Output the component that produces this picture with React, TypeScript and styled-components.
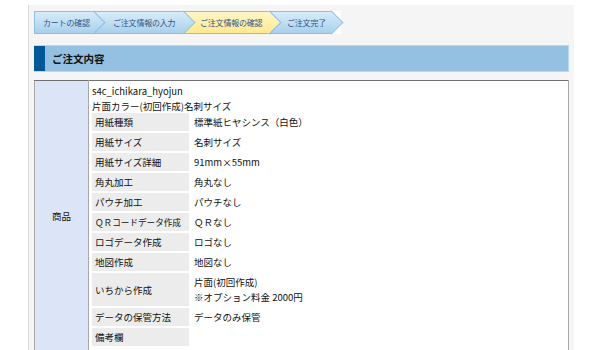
import React from "react";
import styled, { createGlobalStyle } from "styled-components";

const GlobalStyle = createGlobalStyle`
  html, body { margin: 0; padding: 0; background: #ffffff; }
  body {
    font-family: "Noto Sans CJK JP", "Noto Sans", sans-serif;
    color: #111;
  }
`;

const Page = styled.div`
  padding: 5px 0 0 28px;
  width: 600px;
  box-sizing: border-box;
`;

const Main = styled.div`
  width: 546px;
  min-height: 345px;
  box-sizing: border-box;
  border-left: 1px solid #dcdcdc;
  background: #f5f5f5;
  padding: 6px 5px 0 5px;
`;

const Breadcrumb = styled.ol`
  display: flex;
  width: fit-content;
  list-style: none;
  margin: 0;
  padding: 0 9px 0 0;
  background: #ffffff;
  height: 23px;
`;

const Step = styled.li<{ $active?: boolean; $w: number; $pl: number; $first?: boolean }>`
  position: relative;
  box-sizing: border-box;
  width: ${(p) => p.$w}px;
  height: 23px;
  padding-left: ${(p) => p.$pl}px;
  display: flex;
  align-items: center;
  font-size: 8px;
  letter-spacing: -0.2px;
  white-space: nowrap;
  color: #2f5486;
  border-top: 1px solid #8fbde0;
  border-bottom: 1px solid #8fbde0;
  border-left: ${(p) => (p.$first ? "1px solid #8fbde0" : "none")};
  background: ${(p) =>
    p.$active
      ? "linear-gradient(to bottom, #fff6c8 0%, #ffe98f 100%)"
      : "linear-gradient(to bottom, #d8ecf8 0%, #a9d0ec 100%)"};
  &::after {
    content: "";
    position: absolute;
    z-index: 1;
    top: 2px;
    right: -8px;
    width: 16px;
    height: 16px;
    transform: rotate(45deg);
    border-top: 1px solid #8fbde0;
    border-right: 1px solid #8fbde0;
    background: ${(p) =>
      p.$active
        ? "linear-gradient(to bottom right, #fff6c8 0%, #ffe98f 100%)"
        : "linear-gradient(to bottom right, #d8ecf8 0%, #a9d0ec 100%)"};
  }
`;

const StepLabel = styled.span`
  position: relative;
  z-index: 2;
`;

const Heading = styled.h2`
  margin: 11px 0 8px 0;
  height: 27px;
  box-sizing: border-box;
  display: flex;
  align-items: stretch;
  background: #94c1e2;
  border: 1px solid #b9d8ef;
  border-left: none;
  font-size: 10.5px;
  font-weight: bold;
  color: #111;
`;

const HeadingMark = styled.span`
  width: 11px;
  background: #005896;
  margin-right: 7px;
`;

const HeadingText = styled.span`
  display: flex;
  align-items: center;
`;

const OrderTable = styled.table`
  width: 535px;
  border-collapse: collapse;
  background: #ffffff;
  border-top: 1px solid #707070;
  border-left: 1px solid #a8a8a8;
  border-right: 1px solid #a8a8a8;
`;

const SideHead = styled.th`
  width: 53px;
  background: #dce5f8;
  border-right: 1px solid #a8a8a8;
  font-size: 9.5px;
  font-weight: normal;
  color: #111;
  text-align: center;
  vertical-align: middle;
  padding: 0;
`;

const Detail = styled.td`
  padding: 3px 2px 2px 2px;
  vertical-align: top;
  font-size: 9.5px;
  line-height: 15px;
  color: #111;
`;

const TextLine = styled.div`
  padding-left: 1px;
`;

const SpecTable = styled.table`
  border-collapse: separate;
  border-spacing: 2px;
  margin: -3px 0 0 -1px;
`;

const SpecLabel = styled.th<{ $narrow?: boolean }>`
  width: 97px;
  box-sizing: border-box;
  background: #ececec;
  font-weight: normal;
  text-align: left;
  white-space: nowrap;
  padding: 2px 3px 1px 3px;
  font-size: ${(p) => (p.$narrow ? "8.6px" : "9.5px")};
  line-height: 15px;
  color: #111;
  vertical-align: middle;
`;

const SpecValue = styled.td`
  padding: 2px 3px 1px 3px;
  font-size: 9.5px;
  line-height: 15px;
  vertical-align: middle;
  white-space: nowrap;
`;

const steps = [
  { label: "カートの確認", w: 60, pl: 8 },
  { label: "ご注文情報の入力", w: 90, pl: 19 },
  { label: "ご注文情報の確認", w: 86, pl: 16, active: true },
  { label: "ご注文完了", w: 62, pl: 17 },
];

const specs: { label: string; value: string[]; narrow?: boolean }[] = [
  { label: "用紙種類", value: ["標準紙ヒヤシンス（白色）"] },
  { label: "用紙サイズ", value: ["名刺サイズ"] },
  { label: "用紙サイズ詳細", value: ["91mm×55mm"] },
  { label: "角丸加工", value: ["角丸なし"] },
  { label: "パウチ加工", value: ["パウチなし"] },
  { label: "ＱＲコードデータ作成", value: ["ＱＲなし"], narrow: true },
  { label: "ロゴデータ作成", value: ["ロゴなし"] },
  { label: "地図作成", value: ["地図なし"] },
  { label: "いちから作成", value: ["片面(初回作成)", "※オプション料金 2000円"] },
  { label: "データの保管方法", value: ["データのみ保管"] },
  { label: "備考欄", value: [""] },
];

export default function App() {
  return (
    <>
      <GlobalStyle />
      <Page>
        <Main>
          <Breadcrumb>
            {steps.map((s, i) => (
              <Step key={s.label} $w={s.w} $pl={s.pl} $active={s.active} $first={i === 0}>
                <StepLabel>{s.label}</StepLabel>
              </Step>
            ))}
          </Breadcrumb>
          <Heading>
            <HeadingMark />
            <HeadingText>ご注文内容</HeadingText>
          </Heading>
          <OrderTable>
            <tbody>
              <tr>
                <SideHead>商品</SideHead>
                <Detail>
                  <TextLine>s4c_ichikara_hyojun</TextLine>
                  <TextLine>片面カラー(初回作成)名刺サイズ</TextLine>
                  <SpecTable>
                    <tbody>
                      {specs.map((s) => (
                        <tr key={s.label}>
                          <SpecLabel $narrow={s.narrow}>{s.label}</SpecLabel>
                          <SpecValue>
                            {s.value.map((v, i) => (
                              <div key={i}>{v || "\u00a0"}</div>
                            ))}
                          </SpecValue>
                        </tr>
                      ))}
                    </tbody>
                  </SpecTable>
                </Detail>
              </tr>
            </tbody>
          </OrderTable>
        </Main>
      </Page>
    </>
  );
}
